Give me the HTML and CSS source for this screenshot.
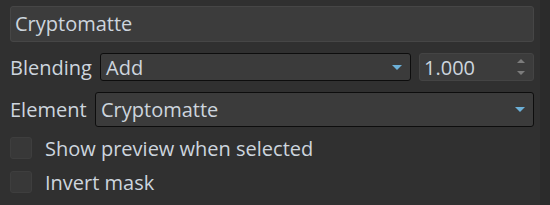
FILE: index.html
```html
<!DOCTYPE html>
<html>
	<head>
		<meta charset="UTF-8">
		<title>Cryptomatte</title>
		<link rel="stylesheet" href="styles.css">
	</head>
	<body>
		<div class="panel">
			<div class="name_field">Cryptomatte</div>

			<div class="row row--blend">
				<div class="label label--blend">Blending</div>
				<div class="combo combo--blend">
					<span>Add</span>
					<span class="combo_arrow"></span>
				</div>
				<div class="spin">
					<span>1.000</span>
					<span class="spin_arrows">
						<span class="spin_up"></span>
						<span class="spin_down"></span>
					</span>
				</div>
			</div>

			<div class="row row--element">
				<div class="label label--element">Element</div>
				<div class="combo combo--element">
					<span>Cryptomatte</span>
					<span class="combo_arrow"></span>
				</div>
			</div>

			<label class="check check--first"><span class="check_box"></span>Show preview when selected</label>
			<label class="check"><span class="check_box"></span>Invert mask</label>
		</div>
		<div class="side_strip"></div>
	</body>
</html>
```

FILE: styles.css
```css
html, body {
	margin: 0;
	height: 100%;
}
body {
	display: flex;
	background: #303030;
	color: #cdd5de;
	font-family: "Open Sans", "Noto Sans", sans-serif;
	font-size: 20px;
	overflow: hidden;
}
.panel {
	flex: 1;
	display: flex;
	flex-direction: column;
	padding: 6px 6px 0 10px;
}
.side_strip {
	width: 10px;
	background: #2b2b2b;
}
.name_field {
	height: 34px;
	line-height: 34px;
	padding: 0 4px;
	background: #3c3c3c;
	border: 1px solid #464646;
	border-radius: 3px;
}
.row {
	display: flex;
	align-items: center;
}
.row--blend {
	margin-top: 11px;
	height: 28px;
}
.row--element {
	margin-top: 11px;
	height: 35px;
}
.label {
	flex: none;
}
.label--blend {
	width: 90px;
}
.label--element {
	width: 85px;
}
.combo {
	display: flex;
	align-items: center;
	justify-content: space-between;
	height: 100%;
	box-sizing: border-box;
	padding: 0 8px 0 5px;
	background: #3b3b3b;
	border: 1px solid #0d0d0d;
	border-radius: 3px;
}
.combo--blend {
	width: 311px;
}
.combo--element {
	flex: 1;
}
.combo_arrow {
	width: 0;
	height: 0;
	border-left: 5px solid transparent;
	border-right: 5px solid transparent;
	border-top: 5px solid #6cb0d8;
}
.spin {
	display: flex;
	align-items: center;
	justify-content: space-between;
	flex: 1;
	margin-left: 8px;
	height: 100%;
	box-sizing: border-box;
	padding: 0 8px 0 4px;
	background: #3c3c3c;
	border: 1px solid #444;
	border-radius: 3px;
}
.spin_arrows {
	display: flex;
	flex-direction: column;
	gap: 8px;
}
.spin_up, .spin_down {
	width: 0;
	height: 0;
	border-left: 4px solid transparent;
	border-right: 4px solid transparent;
}
.spin_up {
	border-bottom: 4px solid #7c7c7c;
}
.spin_down {
	border-top: 4px solid #7c7c7c;
}
.check {
	display: flex;
	align-items: center;
	height: 22px;
	margin-top: 12px;
}
.check--first {
	margin-top: 10px;
}
.check_box {
	width: 20px;
	height: 20px;
	margin-right: 13px;
	background: #383838;
	border: 1px solid #3e3e3e;
	border-radius: 3px;
}
```
